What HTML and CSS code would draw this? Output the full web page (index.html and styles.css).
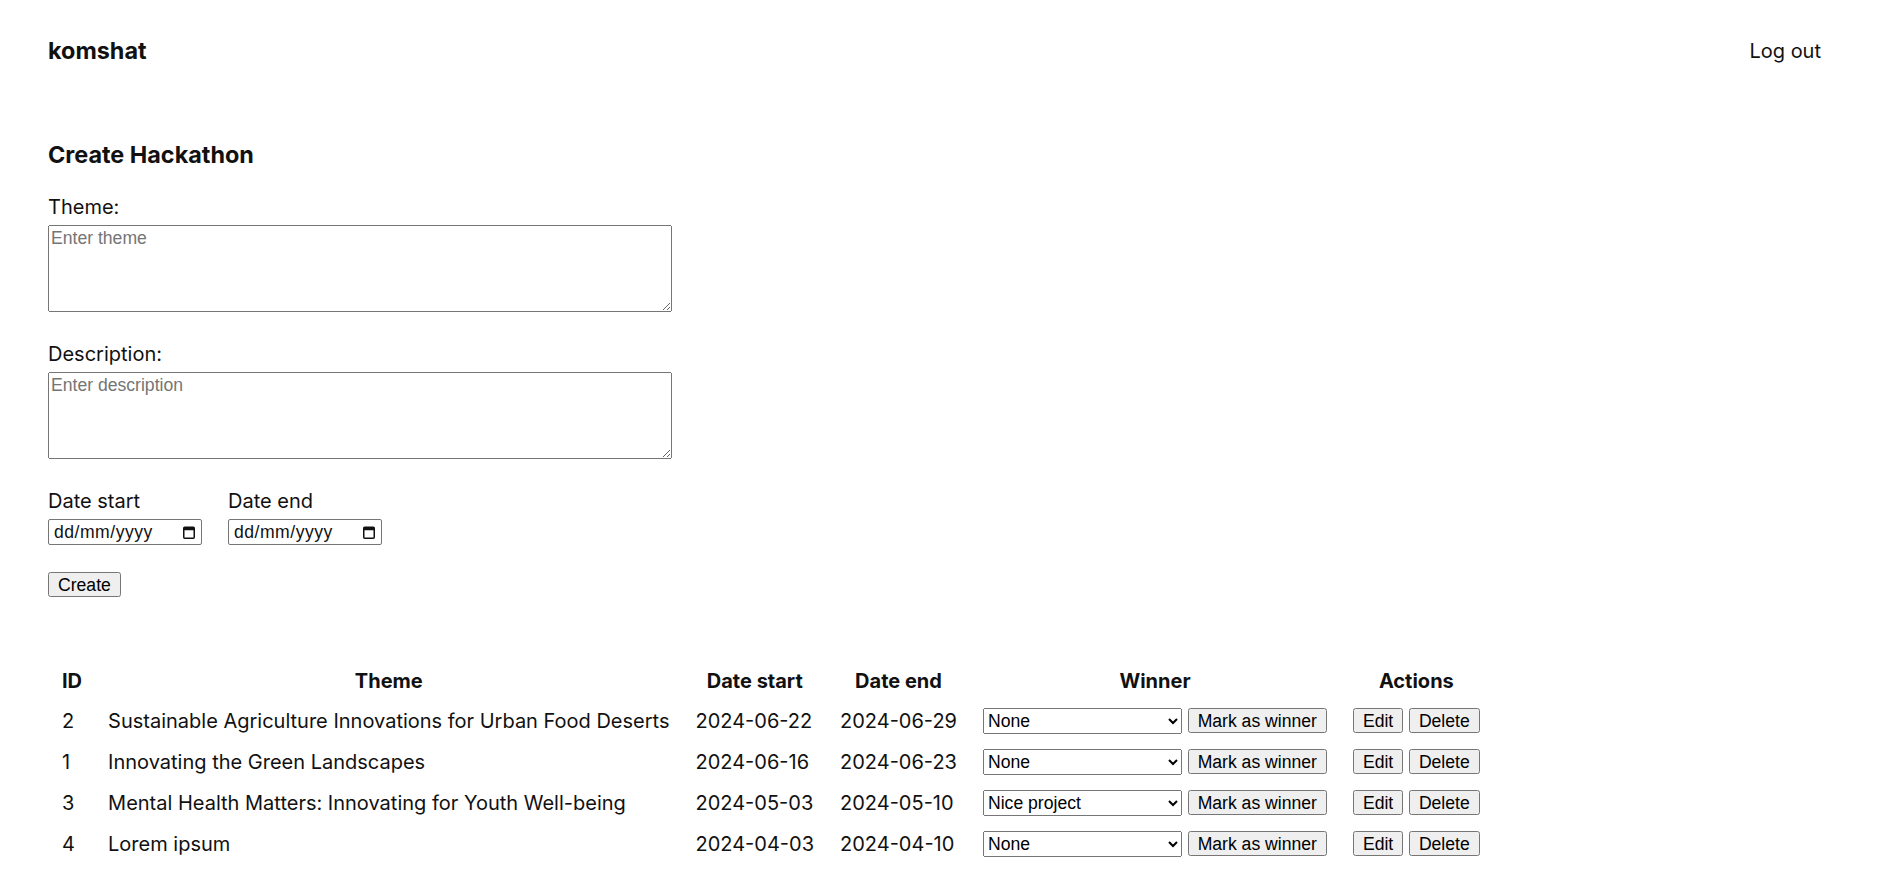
FILE: index.html
```html
<!DOCTYPE html>
<html lang="en-GB">

<head>
    <title>komshat - Hackathons</title>
    <link rel="stylesheet" href="styles.css">
</head>

<body>
    <header class="topbar">
        <span class="brand">komshat</span>
        <a href="#" class="logout">Log out</a>
    </header>

    <main class="content">
        <section class="create-form">
            <h3>Create Hackathon</h3>
            <form>
                <div class="field">
                    <label for="theme">Theme:</label>
                    <textarea id="theme" placeholder="Enter theme"></textarea>
                </div>
                <div class="field">
                    <label for="description">Description:</label>
                    <textarea id="description" placeholder="Enter description"></textarea>
                </div>
                <div class="dates">
                    <div class="date-field">
                        <label for="dateStart">Date start</label>
                        <span class="date-input">
                            <input type="text" id="dateStart" placeholder="dd/mm/yyyy">
                            <svg class="cal-icon" width="14" height="15" viewBox="0 0 14 15">
                                <rect x="1.75" y="2.25" width="10.5" height="11" rx="1" fill="none" stroke="#111" stroke-width="1.5"/>
                                <rect x="1.75" y="2.25" width="10.5" height="3" fill="#111"/>
                            </svg>
                        </span>
                    </div>
                    <div class="date-field">
                        <label for="dateEnd">Date end</label>
                        <span class="date-input">
                            <input type="text" id="dateEnd" placeholder="dd/mm/yyyy">
                            <svg class="cal-icon" width="14" height="15" viewBox="0 0 14 15">
                                <rect x="1.75" y="2.25" width="10.5" height="11" rx="1" fill="none" stroke="#111" stroke-width="1.5"/>
                                <rect x="1.75" y="2.25" width="10.5" height="3" fill="#111"/>
                            </svg>
                        </span>
                    </div>
                </div>
                <button type="button" class="create-btn">Create</button>
            </form>
        </section>

        <table class="hackathons">
            <thead>
                <tr>
                    <th>ID</th>
                    <th>Theme</th>
                    <th>Date start</th>
                    <th>Date end</th>
                    <th>Winner</th>
                    <th>Actions</th>
                </tr>
            </thead>
            <tbody>
                <tr>
                    <td>2</td>
                    <td>Sustainable Agriculture Innovations for Urban Food Deserts</td>
                    <td>2024-06-22</td>
                    <td>2024-06-29</td>
                    <td>
                        <select class="winner-select">
                            <option>None</option>
                            <option>Nice project</option>
                        </select>
                        <button type="button">Mark as winner</button>
                    </td>
                    <td>
                        <button type="button">Edit</button>
                        <button type="button">Delete</button>
                    </td>
                </tr>
                <tr>
                    <td>1</td>
                    <td>Innovating the Green Landscapes</td>
                    <td>2024-06-16</td>
                    <td>2024-06-23</td>
                    <td>
                        <select class="winner-select">
                            <option>None</option>
                            <option>Nice project</option>
                        </select>
                        <button type="button">Mark as winner</button>
                    </td>
                    <td>
                        <button type="button">Edit</button>
                        <button type="button">Delete</button>
                    </td>
                </tr>
                <tr>
                    <td>3</td>
                    <td>Mental Health Matters: Innovating for Youth Well-being</td>
                    <td>2024-05-03</td>
                    <td>2024-05-10</td>
                    <td>
                        <select class="winner-select">
                            <option selected>Nice project</option>
                            <option>None</option>
                        </select>
                        <button type="button">Mark as winner</button>
                    </td>
                    <td>
                        <button type="button">Edit</button>
                        <button type="button">Delete</button>
                    </td>
                </tr>
                <tr>
                    <td>4</td>
                    <td>Lorem ipsum</td>
                    <td>2024-04-03</td>
                    <td>2024-04-10</td>
                    <td>
                        <select class="winner-select">
                            <option>None</option>
                            <option>Nice project</option>
                        </select>
                        <button type="button">Mark as winner</button>
                    </td>
                    <td>
                        <button type="button">Edit</button>
                        <button type="button">Delete</button>
                    </td>
                </tr>
            </tbody>
        </table>
    </main>
</body>

</html>
```

FILE: styles.css
```css
body {
    margin: 0;
    font-family: Inter, "Noto Sans", sans-serif;
    font-size: 20px;
    color: #111;
}

.topbar {
    display: flex;
    justify-content: space-between;
    align-items: center;
    padding: 36px 64px 0 48px;
}

.brand {
    font-size: 23.4px;
    font-weight: bold;
}

.logout {
    color: #111;
    text-decoration: none;
}

.content {
    padding: 0 48px;
}

.create-form h3 {
    font-size: 23.4px;
    margin: 75px 0 26px;
}

label {
    display: block;
    margin-bottom: 6px;
}

input,
select,
textarea,
button {
    font-family: "Liberation Sans", Arial, sans-serif;
    font-size: 17.6px;
}

textarea {
    display: block;
    box-sizing: border-box;
    width: 624px;
    height: 87px;
}

.field {
    margin-bottom: 30px;
}

.dates {
    display: flex;
    gap: 26px;
    margin-bottom: 27px;
}

/* text field + calendar glyph, drawn like the native date control */
.date-input {
    display: flex;
    align-items: center;
    justify-content: space-between;
    box-sizing: border-box;
    width: 154px;
    height: 26px;
    margin-top: 1px;
    padding: 0 5px 0 5px;
    border: 1px solid #767676;
    border-radius: 2px;
    background: #fff;
}

.date-input input {
    width: 110px;
    padding: 0;
    border: none;
    outline: none;
    letter-spacing: 0.5px;
    color: #111;
}

.date-input input::placeholder {
    color: #111;
}

.cal-icon {
    flex-shrink: 0;
}

button {
    height: 25px;
    padding: 1px 8px;
}

.hackathons {
    margin-top: 62px;
}

.hackathons th {
    padding: 8px 12px 6px;
}

.hackathons td {
    padding: 6.5px 12px;
}

.winner-select {
    width: 199px;
    height: 26px;
}
```
